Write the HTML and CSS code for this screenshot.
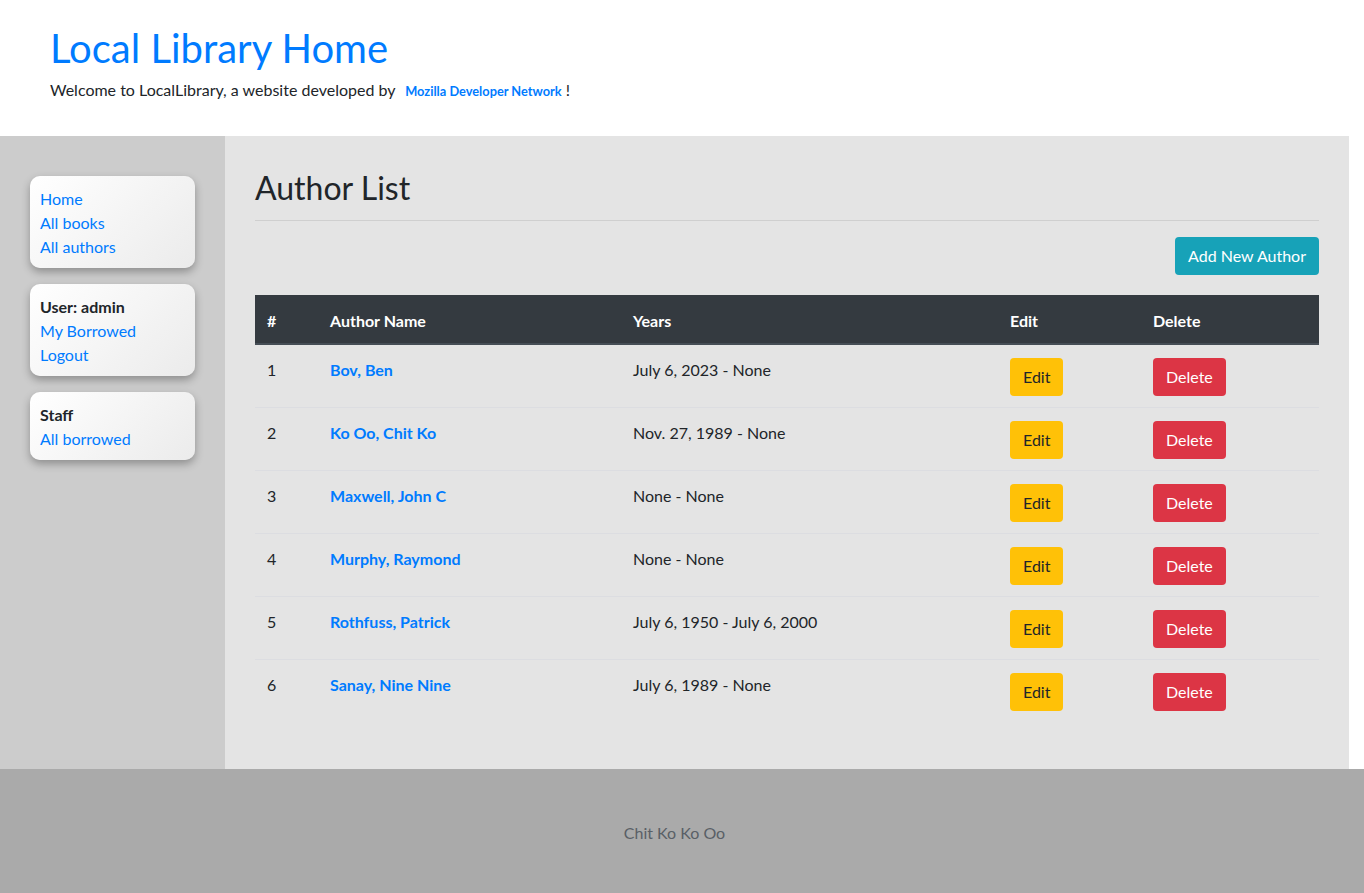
FILE: index.html
```html
<!DOCTYPE html>
<html lang="en">
<head>
<meta charset="utf-8">
<title>Local Library</title>
<link rel="stylesheet" href="styles.css">
</head>
<body>
<header class="site-header">
  <h1 class="site-title">Local Library Home</h1>
  <p class="site-intro">Welcome to LocalLibrary, a website developed by <a class="mdn-link" href="#">Mozilla Developer Network</a> !</p>
</header>
<div class="layout">
  <aside class="sidebar">
    <nav class="side-card">
      <a href="#">Home</a>
      <a href="#">All books</a>
      <a href="#">All authors</a>
    </nav>
    <nav class="side-card">
      <strong>User: admin</strong>
      <a href="#">My Borrowed</a>
      <a href="#">Logout</a>
    </nav>
    <nav class="side-card">
      <strong>Staff</strong>
      <a href="#">All borrowed</a>
    </nav>
  </aside>
  <main class="content">
    <h2 class="page-title">Author List</h2>
    <hr class="divider">
    <div class="actions">
      <a class="btn btn-info" href="#">Add New Author</a>
    </div>
    <table class="authors">
      <thead>
        <tr>
          <th class="c-num">#</th>
          <th class="c-name">Author Name</th>
          <th class="c-years">Years</th>
          <th class="c-edit">Edit</th>
          <th>Delete</th>
        </tr>
      </thead>
      <tbody>
        <tr><td>1</td><td><a class="author" href="#">Bov, Ben</a></td><td>July 6, 2023 - None</td><td><a class="btn btn-warning" href="#">Edit</a></td><td><a class="btn btn-danger" href="#">Delete</a></td></tr>
        <tr><td>2</td><td><a class="author" href="#">Ko Oo, Chit Ko</a></td><td>Nov. 27, 1989 - None</td><td><a class="btn btn-warning" href="#">Edit</a></td><td><a class="btn btn-danger" href="#">Delete</a></td></tr>
        <tr><td>3</td><td><a class="author" href="#">Maxwell, John C</a></td><td>None - None</td><td><a class="btn btn-warning" href="#">Edit</a></td><td><a class="btn btn-danger" href="#">Delete</a></td></tr>
        <tr><td>4</td><td><a class="author" href="#">Murphy, Raymond</a></td><td>None - None</td><td><a class="btn btn-warning" href="#">Edit</a></td><td><a class="btn btn-danger" href="#">Delete</a></td></tr>
        <tr><td>5</td><td><a class="author" href="#">Rothfuss, Patrick</a></td><td>July 6, 1950 - July 6, 2000</td><td><a class="btn btn-warning" href="#">Edit</a></td><td><a class="btn btn-danger" href="#">Delete</a></td></tr>
        <tr><td>6</td><td><a class="author" href="#">Sanay, Nine Nine</a></td><td>July 6, 1989 - None</td><td><a class="btn btn-warning" href="#">Edit</a></td><td><a class="btn btn-danger" href="#">Delete</a></td></tr>
      </tbody>
    </table>
  </main>
</div>
<footer class="site-footer">
  <p class="footer-text">Chit Ko Ko Oo</p>
</footer>
</body>
</html>
```

FILE: styles.css
```css
* { box-sizing: border-box; }
html, body { margin: 0; padding: 0; }
body {
  font-family: Lato, "Open Sans", sans-serif;
  font-size: 16px;
  line-height: 24px;
  color: #212529;
  background: #fff;
}
a { color: #007bff; text-decoration: none; }

.site-header {
  padding: 24px 50px 33px;
  background: #fff;
}
.site-title {
  margin: 0 0 6px;
  font-size: 40px;
  line-height: 48px;
  font-weight: 400;
  color: #007bff;
}
.site-intro { margin: 0; }
.mdn-link {
  font-size: 12.8px;
  font-weight: 700;
  margin-left: 6px;
}

.layout {
  display: flex;
  margin-right: 15px;
  min-height: 633px;
}
.sidebar {
  width: 225px;
  flex: none;
  background: #cccccc;
  padding: 40px 30px 0;
  display: flex;
  flex-direction: column;
  gap: 16px;
}
.side-card {
  display: flex;
  flex-direction: column;
  width: 165px;
  padding: 11px 10px 9px;
  border-radius: 10px;
  background: linear-gradient(135deg, #ffffff 0%, #ebebeb 100%);
  box-shadow: 0 4px 8px rgba(0, 0, 0, 0.3);
}
.side-card strong { color: #212529; font-weight: 700; }

.content {
  flex: 1;
  background: #e4e4e4;
  padding: 30px 30px 30px;
}
.page-title {
  margin: 0;
  font-size: 32px;
  line-height: 42px;
  font-weight: 400;
  color: #212529;
  padding-top: 1px;
}
.divider {
  margin: 11px 0 16px;
  border: 0;
  border-top: 1px solid #cfcfcf;
}
.actions {
  display: flex;
  justify-content: flex-end;
  margin-bottom: 20px;
}
.btn {
  display: inline-block;
  padding: 7px 13px;
  font-size: 16px;
  line-height: 24px;
  border-radius: 4px;
  text-align: center;
}
.btn-info { background: #17a2b8; color: #fff; }
.btn-warning { background: #ffc107; color: #212529; }
.btn-danger { background: #dc3545; color: #fff; }

.authors {
  width: 100%;
  border-collapse: collapse;
  margin-bottom: 16px;
}
.authors th {
  background: #343a40;
  color: #fff;
  font-weight: 700;
  text-align: left;
  padding: 14px 12px 10px;
  border-top: 0;
  border-bottom: 2px solid #454d55;
}
.authors td {
  padding: 13px 12px 11px;
  vertical-align: top;
  border-top: 1px solid #dcdde1;
}
.authors tbody tr:first-child td { border-top: 0; }
.authors tbody tr td { height: 63px; }
.c-num { width: 63px; }
.c-name { width: 303px; }
.c-years { width: 377px; }
.c-edit { width: 143px; }
.author { font-weight: 700; }

.site-footer {
  background: #aaaaaa;
  height: 124px;
  padding-right: 15px;
  display: flex;
  align-items: center;
  justify-content: center;
}
.footer-text {
  margin: 0;
  padding-top: 4px;
  color: #595f66;
}
```
